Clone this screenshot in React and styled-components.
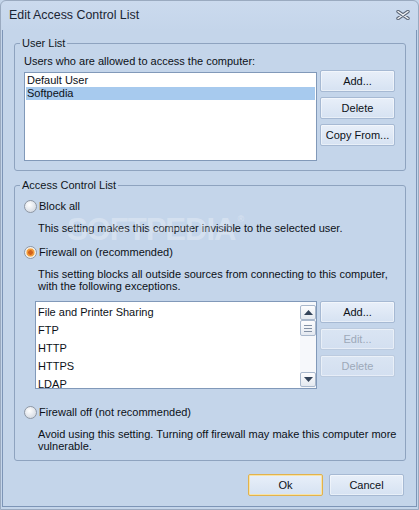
import React from 'react';
import styled, { createGlobalStyle } from 'styled-components';

const GlobalStyle = createGlobalStyle`
  html, body {
    margin: 0;
    padding: 0;
    background: #c4d5ea;
  }
  body {
    font-family: "Liberation Sans", Arial, sans-serif;
    font-size: 11px;
    color: #0c1118;
  }
`;

const Window = styled.div`
  position: relative;
  box-sizing: border-box;
  width: 419px;
  height: 510px;
  display: flex;
  flex-direction: column;
  padding: 0 1px 2px 1px;
  background: linear-gradient(#cbdaee, #c4d5ea 30px);
  border: 1px solid #9aaac0;
  border-radius: 6px 6px 0 0;
  overflow: hidden;
`;

const TitleBar = styled.div`
  height: 27px;
  flex: none;
  display: flex;
  align-items: center;
  justify-content: space-between;
  padding: 0 7px 2px 7px;
`;

const Title = styled.span`
  font-size: 12.4px;
  color: #1a2533;
`;

const CloseGlyph = styled.svg`
  width: 14px;
  height: 10px;
  margin-top: 1px;
`;

const Client = styled.div`
  flex: 1;
  display: flex;
  flex-direction: column;
  border: 1px solid #7d95b7;
  border-top: none;
`;

const Group = styled.fieldset`
  box-sizing: border-box;
  width: 392px;
  margin: ${p => p.$top}px 0 0 11px;
  padding: 0 10px ${p => p.$bottom}px 9px;
  border: 1px solid #8ea3bf;
  border-radius: 3px;
  min-width: 0;
`;

const Legend = styled.legend`
  margin-left: -4px;
  padding: 0 2px;
  line-height: 13px;
  color: #101722;
`;

const Hint = styled.div`
  margin-top: 5px;
  line-height: 13px;
`;

const ListRow = styled.div`
  display: flex;
  align-items: flex-start;
  gap: 3px;
  margin: ${p => p.$top}px 0 0 ${p => p.$indent || 0}px;
`;

const ListBox = styled.div`
  box-sizing: border-box;
  width: ${p => p.$w}px;
  height: ${p => p.$h}px;
  margin-top: ${p => p.$offset || 0}px;
  display: flex;
  background: #fff;
  border: 1px solid #8199b9;
  overflow: hidden;
`;

const Items = styled.div`
  flex: 1;
  padding: ${p => p.$pad};
`;

const UserItem = styled.div`
  height: 13px;
  line-height: 13px;
  padding-left: 1px;
  background: ${p => (p.$selected ? '#a7caee' : 'transparent')};
`;

const RuleItem = styled.div`
  height: 18px;
  line-height: 18px;
  padding-left: 2px;
  white-space: nowrap;
`;

const ScrollBar = styled.div`
  width: 16px;
  display: flex;
  flex-direction: column;
  padding: 3px 0 1px;
  background: #f6f8fb;
`;

const ScrollPart = styled.div`
  box-sizing: border-box;
  height: ${p => p.$h}px;
  margin-top: ${p => (p.$end ? 'auto' : '0')};
  display: flex;
  align-items: center;
  justify-content: center;
  border: 1px solid #a9b8cc;
  border-radius: 2px;
  background: linear-gradient(#fdfdfe, #e4e9f0);
`;

const ButtonColumn = styled.div`
  display: flex;
  flex-direction: column;
  gap: 5px;
`;

const Button = styled.button`
  box-sizing: border-box;
  width: 75px;
  height: 22px;
  padding: 0;
  font: inherit;
  color: ${p => (p.disabled ? '#9da9b9' : '#0c1118')};
  border: 1px solid ${p => (p.$default ? '#e2b24c' : p.disabled ? '#bccbdf' : '#a6b9d3')};
  border-radius: 2px;
  background: ${p =>
    p.disabled
      ? 'linear-gradient(#dae5f3, #d3dff0)'
      : 'linear-gradient(#e8eff9, #d6e2f2)'};
  box-shadow: inset 0 0 0 1px ${p => (p.$default ? '#f7e3a8' : 'rgba(255,255,255,0.45)')};
`;

const Option = styled.label`
  display: flex;
  align-items: center;
  gap: 2px;
  height: 16px;
  margin-top: ${p => p.$top}px;
`;

const Radio = styled.span`
  box-sizing: border-box;
  width: 13px;
  height: 13px;
  border-radius: 50%;
  border: 1px solid #8e97a4;
  background: ${p =>
    p.$checked
      ? 'radial-gradient(circle, #d2611b 0 2px, #ef9a3c 2.6px 3.6px, #fbd9a8 4.2px, #eef1f5 5px)'
      : 'radial-gradient(circle at 40% 35%, #ffffff, #d7dce4 75%)'};
`;

const Description = styled.div`
  margin: ${p => p.$top}px 0 0 14px;
  line-height: 12px;
  white-space: nowrap;
`;

const Footer = styled.div`
  display: flex;
  justify-content: flex-end;
  gap: 6px;
  margin: 13px 12px 0 0;
`;

const Watermark = styled.div`
  position: absolute;
  left: 66px;
  top: 211px;
  font-family: "Liberation Sans", Arial, sans-serif;
  font-weight: bold;
  font-size: 31px;
  letter-spacing: -1px;
  color: rgba(255, 255, 255, 0.3);
  pointer-events: none;
  sup {
    font-size: 9px;
    vertical-align: 18px;
    margin-left: 2px;
  }
`;

const Arrow = ({ down }) => (
  <svg width="9" height="5" viewBox="0 0 9 5">
    <path d={down ? 'M0 0h9L4.5 5z' : 'M0 5h9L4.5 0z'} fill="#34445a" />
  </svg>
);

const Grip = () => (
  <svg width="8" height="7" viewBox="0 0 8 7">
    <path d="M0 .5h8M0 3.5h8M0 6.5h8" stroke="#8391a5" />
  </svg>
);

const rules = ['File and Printer Sharing', 'FTP', 'HTTP', 'HTTPS', 'LDAP'];

export default function App() {
  return (
    <>
      <GlobalStyle />
      <Window>
        <TitleBar>
          <Title>Edit Access Control List</Title>
          <CloseGlyph viewBox="0 0 14 10">
            <path d="M2 1.5l10 7M12 1.5l-10 7" stroke="#5d6879" strokeWidth="3.4" strokeLinecap="round" />
            <path d="M2 1.5l10 7M12 1.5l-10 7" stroke="#f4f6f9" strokeWidth="1.4" strokeLinecap="round" />
          </CloseGlyph>
        </TitleBar>
        <Client>
          <Group $top={7} $bottom={9}>
            <Legend>User List</Legend>
            <Hint>Users who are allowed to access the computer:</Hint>
            <ListRow $top={2}>
              <ListBox $w={293} $h={89} $offset={2}>
                <Items $pad="1px 1px">
                  <UserItem>Default User</UserItem>
                  <UserItem $selected>Softpedia</UserItem>
                </Items>
              </ListBox>
              <ButtonColumn>
                <Button>Add...</Button>
                <Button>Delete</Button>
                <Button>Copy From...</Button>
              </ButtonColumn>
            </ListRow>
          </Group>

          <Group $top={8} $bottom={8}>
            <Legend>Access Control List</Legend>
            <Option $top={6}>
              <Radio />
              Block all
            </Option>
            <Description $top={8}>This setting makes this computer invisible to the selected user.</Description>
            <Option $top={10}>
              <Radio $checked />
              Firewall on (recommended)
            </Option>
            <Description $top={8}>
              This setting blocks all outside sources from connecting to this computer,
              <br />
              with the following exceptions.
            </Description>
            <ListRow $top={9} $indent={11}>
              <ListBox $w={282} $h={88}>
                <Items $pad="1px 0 0 0">
                  {rules.map(r => (
                    <RuleItem key={r}>{r}</RuleItem>
                  ))}
                </Items>
                <ScrollBar>
                  <ScrollPart $h={15}>
                    <Arrow />
                  </ScrollPart>
                  <ScrollPart $h={16}>
                    <Grip />
                  </ScrollPart>
                  <ScrollPart $h={15} $end>
                    <Arrow down />
                  </ScrollPart>
                </ScrollBar>
              </ListBox>
              <ButtonColumn>
                <Button>Add...</Button>
                <Button disabled>Edit...</Button>
                <Button disabled>Delete</Button>
              </ButtonColumn>
            </ListRow>
            <Option $top={15}>
              <Radio />
              Firewall off (not recommended)
            </Option>
            <Description $top={8}>
              Avoid using this setting. Turning off firewall may make this computer more
              <br />
              vulnerable.
            </Description>
          </Group>

          <Footer>
            <Button $default>Ok</Button>
            <Button>Cancel</Button>
          </Footer>
        </Client>
        <Watermark>
          SOFTPEDIA<sup>®</sup>
        </Watermark>
      </Window>
    </>
  );
}
